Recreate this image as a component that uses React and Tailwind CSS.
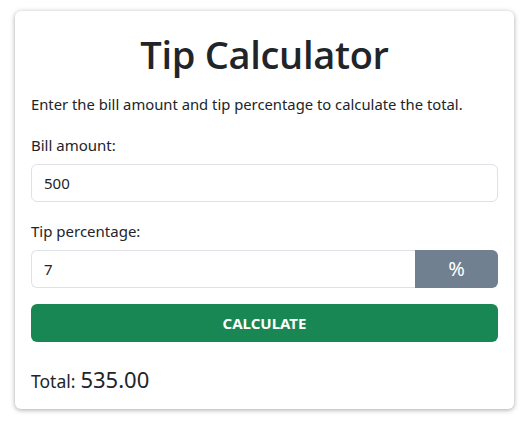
import { useState } from 'react';

const App = () => {
  const [bill, setBill] = useState('500');
  const [tip, setTip] = useState('7');
  const [total, setTotal] = useState('535.00');

  const calculate = () => {
    const b = parseFloat(bill) || 0;
    const t = parseFloat(tip) || 0;
    setTotal((b + (b * t) / 100).toFixed(2));
  };

  return (
    <div className="min-h-screen bg-white pt-[11px] px-[15px] font-['Noto_Sans',sans-serif] text-[#212529]">
      <div className="rounded-[6px] bg-white shadow-[0_1px_5px_rgba(0,0,0,0.35)] px-4 pt-[19px] pb-[13px]">
        <h1 className="text-center text-[38px] leading-[48px] font-semibold font-['Open_Sans',sans-serif] tracking-[-0.3px]">
          Tip Calculator
        </h1>
        <p className="mt-[14px] text-[14.8px] leading-6">
          Enter the bill amount and tip percentage to calculate the total.
        </p>

        <label className="block mt-[17px] text-[15px] leading-6">Bill amount:</label>
        <input
          type="text"
          value={bill}
          onChange={(e) => setBill(e.target.value)}
          className="mt-[7px] block w-full h-[38px] rounded-[6px] border border-[#dee2e6] px-3 text-[15px] outline-none"
        />

        <label className="block mt-[17px] text-[15px] leading-6">Tip percentage:</label>
        <div className="mt-[7px] flex h-[38px]">
          <input
            type="text"
            value={tip}
            onChange={(e) => setTip(e.target.value)}
            className="flex-1 min-w-0 rounded-l-[6px] border border-r-0 border-[#dee2e6] px-3 text-[15px] outline-none"
          />
          <span className="w-[83px] flex items-center justify-center rounded-r-[6px] bg-[#708090] text-white text-[20px]">
            %
          </span>
        </div>

        <button
          onClick={calculate}
          className="mt-4 w-full h-[38px] rounded-[6px] bg-[#198754] text-white text-[15px] font-bold"
        >
          CALCULATE
        </button>

        <div className="mt-[21px] flex items-baseline gap-[5px]">
          <span className="text-[17.5px]">Total:</span>
          <span className="text-[22px]">{total}</span>
        </div>
      </div>
    </div>
  );
};

export default App;
